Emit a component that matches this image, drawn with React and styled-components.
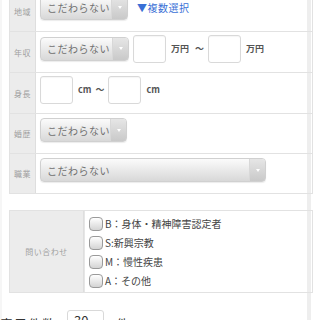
import React from "react";
import styled, { createGlobalStyle } from "styled-components";

const Global = createGlobalStyle`
  html, body { margin: 0; padding: 0; background: #fff; }
  body { font-family: "Noto Sans CJK JP", "Noto Sans", sans-serif; overflow: hidden; }
`;

const Page = styled.div`
  width: 311px;
  border-right: 4px solid #eeeeee;
  border-left: 2px solid #f6f6f6;
  box-sizing: border-box;
  padding-left: 7px;
  min-height: 330px;
  display: flex;
  flex-direction: column;
`;

const Table = styled.div`
  margin-top: ${(p) => p.$mt || 0}px;
  width: 302px;
  border: 1px solid #e2e2e2;
  border-top: ${(p) => (p.$top ? "1px solid #e2e2e2" : "none")};
  display: flex;
  flex-direction: column;
`;

const Row = styled.div`
  display: flex;
  border-top: ${(p) => (p.$first ? "none" : "1px solid #e2e2e2")};
  min-height: ${(p) => p.$h || 40}px;
  box-sizing: border-box;
`;

const Label = styled.div`
  width: ${(p) => p.$w || 25}px;
  flex: none;
  background: #ececec;
  border-right: 1px solid #dedede;
  color: #a0a0a0;
  font-size: 8px;
  display: flex;
  align-items: center;
  justify-content: center;
  letter-spacing: 0.5px;
`;

const Value = styled.div`
  flex: 1;
  padding: 2px 5px 9px 4px;
  display: flex;
  align-items: center;
  min-height: 28px;
`;

const Select = styled.div`
  width: ${(p) => p.$w}px;
  height: 24px;
  box-sizing: border-box;
  border: 1px solid #d0d0d0;
  border-radius: 4px;
  background: linear-gradient(#fbfbfb, #d8d8d8);
  box-shadow: 0 1px 1px rgba(0, 0, 0, 0.08);
  display: flex;
  align-items: center;
  overflow: hidden;
  flex: none;
`;

const SelectText = styled.span`
  flex: 1;
  font-size: 10px;
  color: #707070;
  padding-left: 6px;
  letter-spacing: 0.5px;
`;

const Arrow = styled.span`
  width: 15px;
  align-self: stretch;
  border-left: 1px solid #d8d8d8;
  background: linear-gradient(#e6e6e6, #c9c9c9);
  display: flex;
  align-items: center;
  justify-content: center;
  &::after {
    content: "";
    border-left: 2.5px solid transparent;
    border-right: 2.5px solid transparent;
    border-top: 3px solid #fff;
  }
`;

const Link = styled.span`
  color: #3a70d6;
  font-size: 10px;
  margin-left: 9px;
  letter-spacing: 0.5px;
`;

const TextInput = styled.div`
  width: 33px;
  height: 28px;
  box-sizing: border-box;
  border: 1px solid #d9d9d9;
  border-radius: 3px;
  background: #fff;
  box-shadow: inset 0 1px 1px rgba(0, 0, 0, 0.04);
  flex: none;
  margin-left: ${(p) => p.$ml || 0}px;
`;

const Unit = styled.span`
  font-size: 9px;
  font-weight: bold;
  color: #555;
  margin-left: ${(p) => p.$ml || 5}px;
`;

const Checks = styled.div`
  flex: 1;
  padding: 3px 4px 2px 4px;
  display: flex;
  flex-direction: column;
  border-left: 1px solid #e6e6e6;
`;

const CheckRow = styled.label`
  display: flex;
  align-items: center;
  height: 19px;
  font-size: 10px;
  color: #444;
`;

const Box = styled.span`
  width: 12px;
  height: 12px;
  border: 1px solid #9a9a9a;
  border-radius: 4px;
  background: linear-gradient(#fff, #d4d4d4);
  margin-right: 2px;
  flex: none;
`;

const Footer = styled.div`
  margin-top: 17px;
  margin-left: -9px;
  display: flex;
  align-items: flex-start;
  height: 28px;
`;

const FooterLabel = styled.span`
  font-size: 13px;
  line-height: 14px;
  margin-top: 7px;
  color: #333;
  letter-spacing: 1px;
  margin-left: ${(p) => p.$ml || 0}px;
`;

const CountInput = styled.div`
  width: 37px;
  height: 28px;
  box-sizing: border-box;
  border: 1px solid #d9d9d9;
  border-radius: 3px;
  margin-left: 11px;
  font-size: 13px;
  line-height: 14px;
  color: #333;
  padding: 3px 0 0 6px;
`;

const checks = ["B：身体・精神障害認定者", "S:新興宗教", "M：慢性疾患", "A：その他"];

export default function App() {
  return (
    <>
      <Global />
      <Page>
        <Table $mt={-9}>
          <Row $first>
            <Label>地域</Label>
            <Value>
              <Select $w={88}>
                <SelectText>こだわらない</SelectText>
                <Arrow />
              </Select>
              <Link>▼複数選択</Link>
            </Value>
          </Row>
          <Row $h={41}>
            <Label>年収</Label>
            <Value>
              <Select $w={89}>
                <SelectText>こだわらない</SelectText>
                <Arrow />
              </Select>
              <TextInput $ml={4} />
              <Unit>万円</Unit>
              <Unit $ml={6}>〜</Unit>
              <TextInput $ml={4} />
              <Unit>万円</Unit>
            </Value>
          </Row>
          <Row $h={41}>
            <Label>身長</Label>
            <Value>
              <TextInput />
              <Unit>cm</Unit>
              <Unit $ml={4}>〜</Unit>
              <TextInput $ml={4} />
              <Unit>cm</Unit>
            </Value>
          </Row>
          <Row $h={39}>
            <Label>婚歴</Label>
            <Value>
              <Select $w={87}>
                <SelectText>こだわらない</SelectText>
                <Arrow />
              </Select>
            </Value>
          </Row>
          <Row $h={38}>
            <Label>職業</Label>
            <Value>
              <Select $w={226}>
                <SelectText>こだわらない</SelectText>
                <Arrow />
              </Select>
            </Value>
          </Row>
        </Table>
        <Table $mt={16} $top>
          <Row $first>
            <Label $w={73}>問い合わせ</Label>
            <Checks>
              {checks.map((c) => (
                <CheckRow key={c}>
                  <Box />
                  {c}
                </CheckRow>
              ))}
            </Checks>
          </Row>
        </Table>
        <Footer>
          <FooterLabel>表示件数</FooterLabel>
          <CountInput>30</CountInput>
          <FooterLabel $ml={12}>件</FooterLabel>
        </Footer>
      </Page>
    </>
  );
}
